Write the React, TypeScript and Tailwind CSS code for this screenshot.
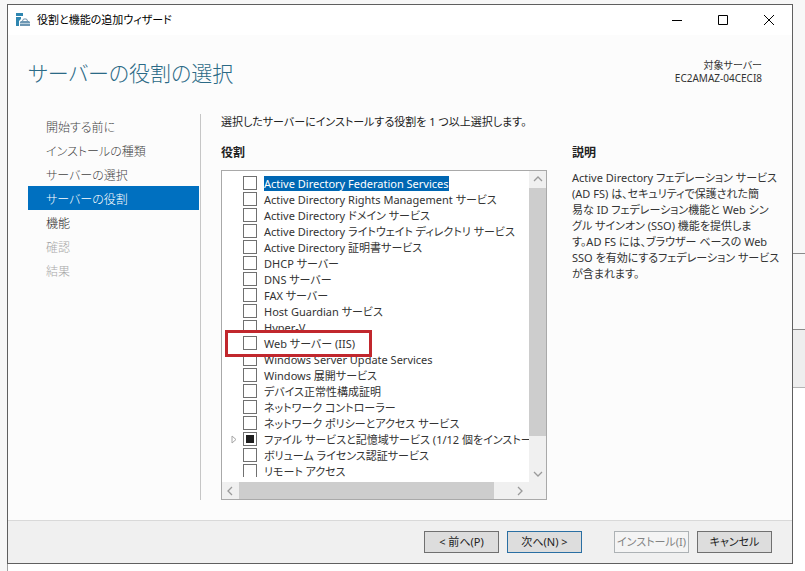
import { clsx } from "clsx";

type Role = {
  name: string;
  selected?: boolean;
  partial?: boolean;
  boxed?: boolean;
};

const steps = [
  { label: "開始する前に", state: "done" },
  { label: "インストールの種類", state: "done" },
  { label: "サーバーの選択", state: "done" },
  { label: "サーバーの役割", state: "current" },
  { label: "機能", state: "next" },
  { label: "確認", state: "disabled" },
  { label: "結果", state: "disabled" },
];

const roles: Role[] = [
  { name: "Active Directory Federation Services", selected: true },
  { name: "Active Directory Rights Management サービス" },
  { name: "Active Directory ドメイン サービス" },
  { name: "Active Directory ライトウェイト ディレクトリ サービス" },
  { name: "Active Directory 証明書サービス" },
  { name: "DHCP サーバー" },
  { name: "DNS サーバー" },
  { name: "FAX サーバー" },
  { name: "Host Guardian サービス" },
  { name: "Hyper-V" },
  { name: "Web サーバー (IIS)", boxed: true },
  { name: "Windows Server Update Services" },
  { name: "Windows 展開サービス" },
  { name: "デバイス正常性構成証明" },
  { name: "ネットワーク コントローラー" },
  { name: "ネットワーク ポリシーとアクセス サービス" },
  { name: "ファイル サービスと記憶域サービス (1/12 個をインストール済み)", partial: true },
  { name: "ボリューム ライセンス認証サービス" },
  { name: "リモート アクセス" },
];

const description = [
  "Active Directory フェデレーション サービス",
  "(AD FS) は、セキュリティで保護された簡",
  "易な ID フェデレーション機能と Web シン",
  "グル サインオン (SSO) 機能を提供しま",
  "す。AD FS には、ブラウザー ベースの Web",
  "SSO を有効にするフェデレーション サービス",
  "が含まれます。",
];

function AppIcon() {
  return (
    <svg width="15" height="15" viewBox="0 0 15 15" aria-hidden="true">
      <path d="M0 0h7v3H0zM0 4h5v2L3 8v5H0z" fill="#2f86b0" />
      <path d="M6.5 8l1-2h3l1 2" fill="none" stroke="#6d8fa6" />
      <path d="M4 9l1-1h8l1 1v4H4z" fill="#6d97b3" />
      <path d="M4 10.5h10" stroke="#b9cfdc" />
    </svg>
  );
}

type ChevronProps = { direction: "up" | "down" | "left" | "right" };

const chevrons = {
  up: "M1 6l4-4 4 4",
  down: "M1 3l4 4 4-4",
  left: "M6 1L2 5l4 4",
  right: "M3 1l4 4-4 4",
};

function Chevron({ direction }: ChevronProps) {
  return (
    <svg width="10" height="10" viewBox="0 0 10 10" aria-hidden="true">
      <path d={chevrons[direction]} fill="none" stroke="#9a9a9a" strokeWidth="1.3" />
    </svg>
  );
}

function TitleBar() {
  return (
    <header className="flex h-[30px] items-center bg-white pl-2">
      <AppIcon />
      <span className="ml-[6px] flex-1 text-[11px] text-black">役割と機能の追加ウィザード</span>
      <button type="button" aria-label="最小化" className="flex h-full w-[46px] items-center justify-center">
        <svg width="10" height="10" aria-hidden="true">
          <path d="M0 5.5h10" stroke="#000" />
        </svg>
      </button>
      <button type="button" aria-label="最大化" className="flex h-full w-[46px] items-center justify-center">
        <svg width="10" height="10" aria-hidden="true">
          <path d="M.5.5h9v9h-9z" fill="none" stroke="#000" />
        </svg>
      </button>
      <button type="button" aria-label="閉じる" className="flex h-full w-[46px] items-center justify-center">
        <svg width="10" height="10" aria-hidden="true">
          <path d="M0 0l10 10M10 0L0 10" stroke="#000" />
        </svg>
      </button>
    </header>
  );
}

function StepNav() {
  return (
    <nav className="mr-[1px] flex w-[171px] shrink-0 flex-col">
      {steps.map((step) => (
        <a
          key={step.label}
          href="#"
          aria-current={step.state === "current" ? "step" : undefined}
          className={clsx(
            "flex h-6 items-center pt-1 pl-[18px] text-[12px] font-light whitespace-nowrap",
            step.state === "current" && "bg-[#0070c0] text-white",
            step.state === "done" && "text-[#444]",
            step.state === "next" && "text-[#222]",
            step.state === "disabled" && "text-[#a8a8a8]"
          )}
        >
          {step.label}
        </a>
      ))}
    </nav>
  );
}

function RoleRow({ role }: { role: Role }) {
  return (
    <li className={clsx("relative flex h-4 items-center", role.boxed && "isolate z-10")}>
      <span className="flex w-[21px] shrink-0 justify-end pr-[6px]">
        {role.partial && (
          <svg width="6" height="9" viewBox="0 0 6 9" aria-hidden="true">
            <path d="M1 1l4 3.5L1 8z" fill="none" stroke="#a6a6a6" />
          </svg>
        )}
      </span>
      <label className="flex h-4 items-center whitespace-nowrap">
        <input
          type="checkbox"
          className={clsx(
            "size-[14px] shrink-0 appearance-none border border-[#707070]",
            role.partial ? "bg-[#1e1e1e] bg-clip-content p-[2px]" : "bg-white"
          )}
        />
        <span className={clsx("ml-[7px] leading-[15px]", role.selected ? "bg-[#0067b3] text-white" : "text-[#333]")}>
          {role.name}
        </span>
      </label>
      {role.boxed && (
        <span className="pointer-events-none absolute -top-[5px] left-[3px] -z-10 h-[27px] w-[147px] border-3 border-[#c1272d] bg-white" />
      )}
    </li>
  );
}

function RoleList() {
  return (
    <div className="grid grid-cols-[minmax(0,1fr)_17px] border border-[#a9a9a9] bg-white text-[11px]">
      <ul className="mb-[5px] h-[306px] overflow-hidden pt-1">
        {roles.map((role) => (
          <RoleRow key={role.name} role={role} />
        ))}
      </ul>
      <div className="flex flex-col items-center bg-[#f0f0f0]">
        <button type="button" aria-label="上へ" className="flex h-[17px] w-full items-center justify-center">
          <Chevron direction="up" />
        </button>
        <div className="w-full grow bg-[#cdcdcd]" />
        <button type="button" aria-label="下へ" className="flex h-[46px] w-full items-end justify-center pb-[3px]">
          <Chevron direction="down" />
        </button>
      </div>
      <div className="col-span-2 flex h-[17px] items-center bg-[#f0f0f0]">
        <button type="button" aria-label="左へ" className="flex h-full w-[17px] items-center justify-center">
          <Chevron direction="left" />
        </button>
        <div className="h-full grow bg-[#cdcdcd]" />
        <button type="button" aria-label="右へ" className="flex h-full w-[52px] items-center justify-center">
          <Chevron direction="right" />
        </button>
      </div>
    </div>
  );
}

const buttonClass = "h-[22px] w-[75px] border text-[11px] leading-5 whitespace-nowrap";

function Footer() {
  return (
    <footer className="flex h-[43px] items-center justify-end border-t border-[#d9d9d9] bg-[#f0f0f0] pr-5">
      <button type="button" className={clsx(buttonClass, "border-[#707070] bg-[#dddddd] text-[#222]")}>
        &lt; 前へ(P)
      </button>
      <button type="button" className={clsx(buttonClass, "ml-2 border-[#2a6fa3] bg-[#dddddd] text-[#222]")}>
        次へ(N) &gt;
      </button>
      <button type="button" disabled className={clsx(buttonClass, "ml-8 border-[#adb2b5] bg-[#f4f4f4] text-[#838383]")}>
        インストール(I)
      </button>
      <button type="button" className={clsx(buttonClass, "ml-2 border-[#707070] bg-[#dddddd] text-[#222]")}>
        キャンセル
      </button>
    </footer>
  );
}

export default function App() {
  return (
    <div className="flex min-h-screen bg-[#f7f7f7] font-['Noto_Sans','Noto_Sans_CJK_JP',sans-serif] [font-feature-settings:'palt']">
      <div className="w-[7px] shrink-0" />

      <div className="flex min-w-0 flex-1 flex-col pt-1">
        <main className="border border-[#5f5f5f] bg-[#fcfcfc]">
          <TitleBar />

          <div className="flex items-start justify-between pt-6 pr-[30px] pl-5">
            <h1 className="text-[21px] leading-7 font-light text-[#2b6a86]">サーバーの役割の選択</h1>
            <div className="text-right text-[10px] leading-[13px] text-[#333]">
              <p>対象サーバー</p>
              <p>EC2AMAZ-04CECI8</p>
            </div>
          </div>

          <div className="flex pt-[27px] pb-5 pl-5">
            <StepNav />
            <div className="flex min-w-0 flex-1 flex-col border-l border-[#c6c6c6] pl-5 text-[11px] text-[#333]">
              <p className="h-[31px] leading-4 text-[#222]">
                選択したサーバーにインストールする役割を 1 つ以上選択します。
              </p>
              <div className="flex">
                <section className="w-[326px]">
                  <h2 className="h-[25px] text-[12px] leading-4 font-semibold text-[#222]">役割</h2>
                  <RoleList />
                </section>
                <section className="ml-[25px] min-w-0 flex-1">
                  <h2 className="h-[25px] text-[12px] leading-4 font-semibold text-[#222]">説明</h2>
                  <p className="leading-4 whitespace-pre-line">{description.join("\n")}</p>
                </section>
              </div>
            </div>
          </div>

          <Footer />
        </main>
        <div className="grow border-l border-[#a0a0a0] bg-white" />
      </div>

      <div className="flex w-3 shrink-0 flex-col">
        <div className="h-[253px]" />
        <div className="h-[76px] border-t border-[#8a8a8a]" />
        <div className="h-[58px] border-t border-[#8a8a8a] bg-[#eeeeee]" />
        <div className="grow border-t border-[#b5b5b5] bg-white" />
      </div>
    </div>
  );
}
